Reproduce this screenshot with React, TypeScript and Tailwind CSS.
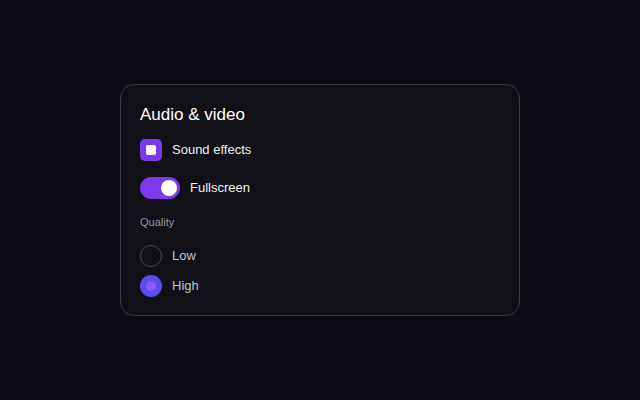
import { useState } from "react"

export default function App() {
  const [sound, setSound] = useState(true)
  const [full, setFull] = useState(true)
  const [quality, setQuality] = useState("high")

  return (
    <main
      className="w-[640px] h-[400px] bg-[#0b0c14] flex items-center justify-center"
      style={{ fontFamily: "'Liberation Sans', Arial, sans-serif" }}
    >
      <div className="w-[400px] h-[232px] rounded-[14px] border border-[#3a3b44] bg-[#101016] px-[19px] pt-[18px]">
        <h2 className="text-[17px] leading-[24px] text-white">Audio &amp; video</h2>

        <label className="mt-[12px] flex items-center gap-[10px] h-[22px] cursor-pointer">
          <button
            onClick={() => setSound(!sound)}
            className="w-[22px] h-[22px] rounded-[5px] bg-[#7c3aed] flex items-center justify-center"
          >
            {sound && <span className="w-[10px] h-[10px] rounded-[2px] bg-white" />}
          </button>
          <span className="text-[13px] text-[#f2f2f5]">Sound effects</span>
        </label>

        <label className="mt-[16px] flex items-center gap-[10px] h-[22px] cursor-pointer">
          <button
            onClick={() => setFull(!full)}
            className={`w-[40px] h-[22px] rounded-full flex items-center px-[3px] ${full ? "bg-[#7c3aed] justify-end" : "bg-[#3a3b44] justify-start"}`}
          >
            <span className="w-[16px] h-[16px] rounded-full bg-white" />
          </button>
          <span className="text-[13px] text-[#f2f2f5]">Fullscreen</span>
        </label>

        <div className="mt-[15px] text-[11px] leading-[16px] text-[#9a9aa3]">Quality</div>

        <div className="mt-[15px] flex flex-col gap-[8px]">
          {[
            { id: "low", label: "Low" },
            { id: "high", label: "High" },
          ].map((o) => (
            <label key={o.id} className="flex items-center gap-[10px] h-[22px] cursor-pointer" onClick={() => setQuality(o.id)}>
              {quality === o.id ? (
                <span className="w-[22px] h-[22px] rounded-full bg-[#5b4cf0] flex items-center justify-center">
                  <span className="w-[10px] h-[10px] rounded-full bg-[#8b5cf6]" />
                </span>
              ) : (
                <span className="w-[22px] h-[22px] rounded-full border border-[#4a4b55]" />
              )}
              <span className="text-[13px] text-[#c4c4cc]">{o.label}</span>
            </label>
          ))}
        </div>
      </div>
    </main>
  )
}
